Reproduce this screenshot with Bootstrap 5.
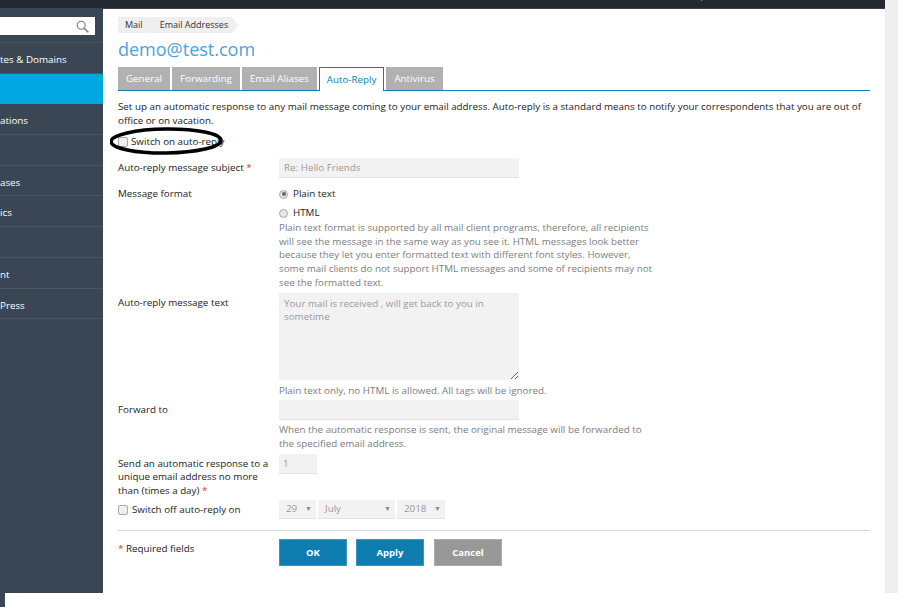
<!DOCTYPE html>
<html lang="en">
<head>
<meta charset="utf-8">
<title>Auto-Reply</title>
<link href="https://cdn.jsdelivr.net/npm/bootstrap@5.3.0/dist/css/bootstrap.min.css" rel="stylesheet">
<style>
html,body{height:100%;overflow:hidden;background:#fff}
body{font-family:"Open Sans","Noto Sans",sans-serif;font-size:9.8px;line-height:14px;color:#222}
.shell{width:898px;height:593px;background:#efefef;position:relative;overflow:hidden}
.topbar{width:885px;height:9px;background:#22282f;border-bottom:1px solid #39434e;color:#bbb;position:relative;overflow:hidden;font-size:9px}
.topbar span{position:absolute;left:670px;top:-11.5px;white-space:nowrap}
.topbar b{color:#fff}
.frame{width:885px;height:584px}
.side{width:103px;background:#3a4653;color:#fff;flex:none}
.searchwrap{height:34px;padding:8px 8px 0 0;border-bottom:1px solid #46525f}
.searchbox{height:18px;background:#fff;display:flex;justify-content:flex-end;align-items:center;padding-right:6px}
.sitem{height:30.7px;padding-top:1px;line-height:31px;border-bottom:1px solid #4a5663;white-space:nowrap;overflow:hidden}
.sitem.on{background:#00a7e1;border-bottom:0}
.main{flex:1;background:#fff;padding:8px 15px 0}
.crumbs{display:flex;height:16px;line-height:16px;font-size:9px;color:#333}
.crumb{background:#efefef;padding:0 4px 0 7px;position:relative}
.crumb.one{padding-right:7px;margin-right:1px}
.crumb:after{content:"";position:absolute;left:100%;top:0;border-left:6px solid #efefef;border-top:8px solid transparent;border-bottom:8px solid transparent;z-index:1}
.crumb.two{padding-left:9px;padding-right:4px}
.pagetitle{font-size:18px;line-height:26px;color:#4aa3e0;margin:3px 0 5px;font-weight:400}
.tabsrow{display:flex;gap:2px;border-bottom:1px solid #0e7db0;height:24px}
.tabx{background:#b1b1b1;color:#fff;height:23px;line-height:23px;padding:0 8px}
.tabx.on{background:#fff;color:#0e7db0;border:1px solid #0e7db0;border-bottom:0;height:24px;margin-bottom:-1px;position:relative;line-height:23px;padding:0 7px}
.intro{margin:9px 0 0;line-height:14px;color:#222}
.frow{display:flex;align-items:flex-start}
.flabel{width:161px;flex:none;line-height:14px;padding-right:8px}
.req{color:#d33}
.field{background:#f2f2f2;border:0;border-bottom:1px solid #e3e3e3;color:#9a9a9a;font-size:9.8px;display:block;outline:0}
.hintx{color:#7d7d7d;line-height:13.7px;width:374px}
.cbox{width:10px;height:10px;border:1px solid #a8a8a8;border-radius:2px;background:#f0f0f0;display:inline-block;flex:none}
.radiox{width:9px;height:9px;border:1px solid #aaa;border-radius:50%;background:#e6e6e6;display:inline-block;flex:none;position:relative}
.radiox.sel:after{content:"";position:absolute;left:1.5px;top:1.5px;width:4px;height:4px;border-radius:50%;background:#666}
.ringwrap{height:22px;display:flex;align-items:center;gap:3px;position:relative;margin-top:3px}
.ringx{position:absolute;left:-8px;top:-4px;width:116px;height:30px}
.sel3{height:19px;background:#f2f2f2;border-bottom:1px solid #e3e3e3;color:#9a9a9a;display:flex;justify-content:space-between;align-items:center;padding:0 4px 0 7px}
.sel3 i{font-style:normal;font-size:7px;color:#888}
.actbtn{width:68px;height:27px;line-height:25px;text-align:center;font-weight:700;font-size:9.5px;color:#fff;background:#0e7db0;border:1px solid #3b97c1;padding:0;border-radius:0}
.actbtn.gray{background:#989898;border-color:#aaa}
.btngap{margin-left:1px}
.sep{border-top:1px solid #d6d6d6;margin:0;opacity:1}
.strip{position:absolute;left:0;top:593px;width:5px;height:14px;background:#3a4653}
</style>
</head>
<body>
<div class="shell">
  <div class="topbar"><span>Subscription <b>www.testmail.com</b></span></div>
  <div class="frame d-flex">
    <aside class="side">
      <div class="searchwrap"><div class="searchbox">
        <svg width="13" height="13" viewBox="0 0 13 13" fill="none" stroke="#777" stroke-width="1.1"><circle cx="5.2" cy="5.2" r="4"/><path d="M8.2 8.2 12.3 12.3" stroke-width="1.5"/></svg>
      </div></div>
      <div class="sitem">tes &amp; Domains</div>
      <div class="sitem on"></div>
      <div class="sitem">ations</div>
      <div class="sitem"></div>
      <div class="sitem">ases</div>
      <div class="sitem">ics</div>
      <div class="sitem"></div>
      <div class="sitem">nt</div>
      <div class="sitem">Press</div>
    </aside>
    <main class="main">
      <div class="crumbs"><div class="crumb one">Mail</div><div class="crumb two">Email Addresses</div></div>
      <h1 class="pagetitle">demo@test.com</h1>
      <div class="tabsrow">
        <div class="tabx">General</div><div class="tabx">Forwarding</div><div class="tabx">Email Aliases</div><div class="tabx on">Auto-Reply</div><div class="tabx">Antivirus</div>
      </div>
      <p class="intro">Set up an automatic response to any mail message coming to your email address. Auto-reply is a standard means to notify your correspondents that you are out of office or on vacation.</p>
      <div class="ringwrap">
        <span class="cbox"></span><span>Switch on auto-reply</span>
        <svg class="ringx" viewBox="0 0 116 30" fill="none"><ellipse cx="56" cy="14" rx="55" ry="12" stroke="#000" stroke-width="3.6" transform="rotate(-0.6 56 14)"/></svg>
      </div>
      <div class="frow" style="margin-top:5px"><div class="flabel" style="padding-top:3px">Auto-reply message subject <span class="req">*</span></div>
        <input class="field" readonly style="width:240px;height:20px;padding:0 5px" value="Re: Hello Friends"></div>
      <div class="frow" style="margin-top:9px"><div class="flabel">Message format</div>
        <div>
          <div class="d-flex align-items-center" style="gap:5px;height:14px"><span class="radiox sel"></span><span>Plain text</span></div>
          <div class="d-flex align-items-center" style="gap:5px;height:14px;margin-top:5px"><span class="radiox"></span><span>HTML</span></div>
          <div class="hintx" style="margin-top:1px">Plain text format is supported by all mail client programs, therefore, all recipients will see the message in the same way as you see it. HTML messages look better because they let you enter formatted text with different font styles. However, some mail clients do not support HTML messages and some of recipients may not see the formatted text.</div>
        </div></div>
      <div class="frow" style="margin-top:3px"><div class="flabel" style="padding-top:3px">Auto-reply message text</div>
        <div>
          <textarea class="field" readonly style="width:240px;height:87px;padding:4px 5px;line-height:13px;border:0;resize:vertical">Your mail is received , will get back to you in sometime</textarea>
          <div class="hintx" style="margin-top:4px">Plain text only, no HTML is allowed. All tags will be ignored.</div>
        </div></div>
      <div class="frow" style="margin-top:3px"><div class="flabel" style="padding-top:3px">Forward to</div>
        <div>
          <div class="field" style="width:240px;height:20px"></div>
          <div class="hintx" style="margin-top:3px">When the automatic response is sent, the original message will be forwarded to the specified email address.</div>
        </div></div>
      <div class="frow" style="margin-top:3px"><div class="flabel" style="line-height:13.5px;padding-top:3px">Send an automatic response to a unique email address no more than (times a day) <span class="req">*</span></div>
        <div class="field" style="width:38px;height:20px;line-height:19px;padding-left:4px">1</div></div>
      <div class="frow" style="margin-top:3px"><div class="flabel d-flex align-items-center" style="gap:4px;height:19px"><span class="cbox"></span><span>Switch off auto-reply on</span></div>
        <div class="d-flex" style="gap:2px"><div class="sel3" style="width:37px"><span>29</span><i>▼</i></div><div class="sel3" style="width:77px"><span>July</span><i>▼</i></div><div class="sel3" style="width:48px"><span>2018</span><i>▼</i></div></div></div>
      <hr class="sep" style="margin-top:11px">
      <div class="frow" style="margin-top:8px"><div class="flabel" style="padding-top:3px"><span class="req">*</span> Required fields</div>
        <div class="d-flex" style="gap:9px"><button type="button" class="btn actbtn">OK</button><button type="button" class="btn actbtn">Apply</button><button type="button" class="btn actbtn gray btngap">Cancel</button></div></div>
    </main>
  </div>
</div>
<div class="strip"></div>
<script src="https://cdn.jsdelivr.net/npm/bootstrap@5.3.0/dist/js/bootstrap.bundle.min.js"></script>
</body>
</html>
